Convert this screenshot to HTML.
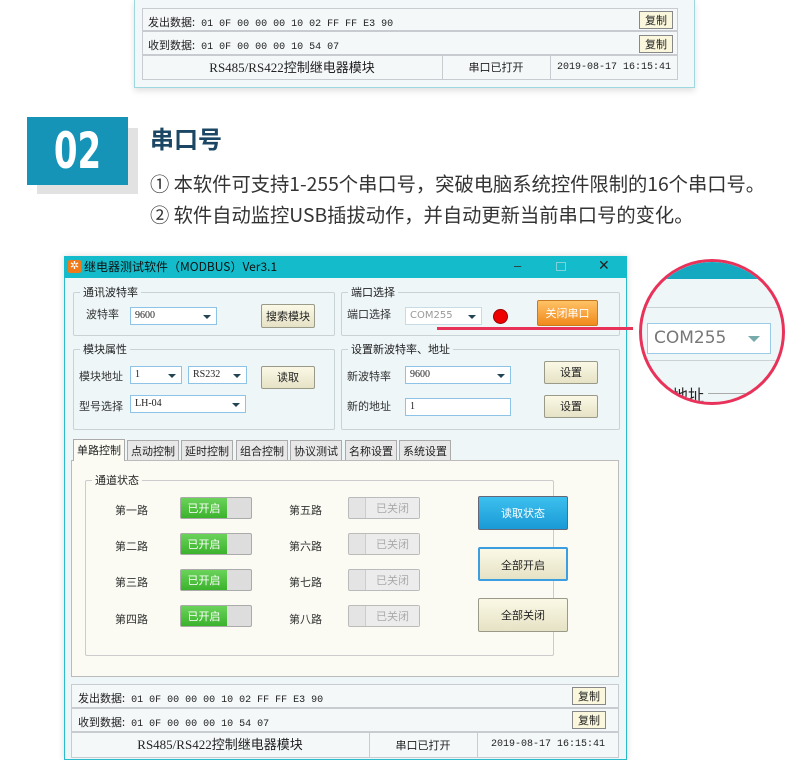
<!DOCTYPE html>
<html><head><meta charset="utf-8"><style>
*{margin:0;padding:0;box-sizing:border-box}
body{width:790px;height:760px;background:#fff;position:relative;overflow:hidden;font-family:"Liberation Sans","Noto Sans CJK SC",sans-serif;color:#222}
.a{position:absolute}
.t12{font-size:11px;font-family:"Noto Sans CJK SC",sans-serif}
.mono{font-family:"Liberation Mono","Noto Sans CJK SC",monospace;font-size:10px}
.gb{position:absolute;border:1px solid #c9d3d6;border-radius:2px}
.gb>.lg{position:absolute;top:-9px;left:6px;background:#eef6f8;padding:0 3px;font-size:11px;font-family:"Noto Sans CJK SC",sans-serif}
.sel{position:absolute;background:#fff;border:1px solid #8cc3e6;height:18px;font-size:10px;padding:2px 4px;font-family:"Liberation Serif",serif}
.sel:after{content:"";position:absolute;right:5px;top:7px;border:4px solid transparent;border-top:4px solid #245;border-bottom:0}
.btn{position:absolute;border:1px solid #9a9a88;border-radius:2px;background:linear-gradient(#fbf9e6,#e6e2c6);font-size:11px;text-align:center;font-family:"Noto Sans CJK SC",sans-serif}
.tab{position:absolute;top:440px;height:20px;border:1px solid #aaa;border-bottom:0;background:#e8e8e8;font-size:11px;padding:2px 3px;font-family:"Noto Sans CJK SC",sans-serif}
.on{position:absolute;width:72px;height:22px;border:1px solid #aaa;border-radius:2px;background:#ddd}
.on i{position:absolute;left:0;top:0;width:46px;height:20px;background:linear-gradient(#6ad35a,#3bb22c);color:#fff;font-style:normal;font-size:11px;text-align:center;line-height:20px;font-family:"Noto Sans CJK SC",sans-serif}
.off{position:absolute;width:72px;height:22px;border:1px solid #bbb;border-radius:2px;background:#e4e4e4}
.off i{position:absolute;right:0;top:0;width:54px;height:20px;background:#ececec;border-left:1px solid #ccc;color:#aaa;font-style:normal;font-size:11px;text-align:center;line-height:20px;font-family:"Noto Sans CJK SC",sans-serif}
.lb{position:absolute;font-size:11px;font-family:"Noto Sans CJK SC",sans-serif;color:#333}
.row{position:absolute;border:1px solid #c8ccd0;background:#f4f8f9}
.cp{position:absolute;width:34px;height:18px;border:1px solid #888;background:#fbf7dc;font-size:11px;text-align:center;line-height:16px;font-family:"Noto Sans CJK SC",sans-serif}
</style></head><body>

<div class="a" style="left:134px;top:0;width:561px;height:88px;background:#f2f8fa;border:1px solid #9fd7df;border-top:0;box-shadow:0 3px 6px rgba(0,0,0,.12)"></div>
<div class="row" style="left:142px;top:8px;width:536px;height:23px"><span class="mono a" style="left:5px;top:5px"><span class="t12">发出数据:</span> 01 0F 00 00 00 10 02 FF FF E3 90</span><div class="cp" style="left:496px;top:2px">复制</div></div>
<div class="row" style="left:142px;top:31px;width:536px;height:24px"><span class="mono a" style="left:5px;top:5px"><span class="t12">收到数据:</span> 01 0F 00 00 00 10 54 07</span><div class="cp" style="left:496px;top:3px">复制</div></div>
<div class="row" style="left:142px;top:55px;width:536px;height:25px"></div>
<div class="a" style="left:142px;top:55px;width:300px;height:25px;font-size:13px;text-align:center;line-height:25px;font-family:'Liberation Serif','Noto Sans CJK SC',serif">RS485/RS422控制继电器模块</div>
<div class="a" style="left:442px;top:55px;width:1px;height:25px;background:#c8ccd0"></div>
<div class="a t12" style="left:442px;top:55px;width:108px;text-align:center;line-height:25px">串口已打开</div>
<div class="a" style="left:550px;top:55px;width:1px;height:25px;background:#c8ccd0"></div>
<div class="a mono" style="left:550px;top:55px;width:128px;text-align:center;line-height:25px">2019-08-17 16:15:41</div>

<div class="a" style="left:37px;top:128px;width:101px;height:66px;background:#e2e2e2"></div>
<div class="a" style="left:27px;top:117px;width:101px;height:68px;background:#1694b8"></div>
<div class="a" style="left:27px;top:117px;width:101px;height:68px;color:#fff;font-size:50px;font-weight:bold;text-align:center;line-height:68px;font-family:'DejaVu Sans','Liberation Sans',sans-serif;transform:scaleX(0.68)">02</div>
<div class="a" style="left:150px;top:121px;font-size:24px;font-weight:bold;color:#1b4764;font-family:'Noto Sans CJK SC',sans-serif;line-height:34px">串口号</div>
<div class="a" style="left:150px;top:169px;font-size:19.3px;color:#333;font-family:'Noto Sans CJK SC',sans-serif;line-height:28px;white-space:nowrap">① 本软件可支持1-255个串口号，突破电脑系统控件限制的16个串口号。</div>
<div class="a" style="left:150px;top:200px;font-size:19.3px;color:#333;font-family:'Noto Sans CJK SC',sans-serif;line-height:28px;white-space:nowrap">② 软件自动监控USB插拔动作，并自动更新当前串口号的变化。</div>

<div class="a" style="left:64px;top:256px;width:563px;height:504px;background:#eef6f8;border:1px solid #2bbccb;box-shadow:0 0 6px rgba(0,0,0,.15)"></div>
<div class="a" style="left:64px;top:256px;width:563px;height:22px;background:#14bccb"></div>
<div class="a" style="left:68px;top:260px;width:13px;height:13px;background:#f07a1a;border-radius:2px;color:#fff;font-size:11px;line-height:13px;text-align:center">✲</div>
<div class="a" style="left:84px;top:258px;font-size:12px;color:#111;font-family:'Noto Sans CJK SC',sans-serif">继电器测试软件（MODBUS）Ver3.1</div>
<div class="a" style="left:514px;top:258px;font-size:13px;color:#333">–</div>
<div class="a" style="left:556px;top:262px;width:10px;height:9px;border:1px solid #7fd0d8"></div>
<div class="a" style="left:598px;top:257px;font-size:14px;color:#222">✕</div>

<div class="gb" style="left:73px;top:292px;width:262px;height:44px"><span class="lg">通讯波特率</span></div>
<div class="lb" style="left:86px;top:306px">波特率</div>
<div class="sel" style="left:130px;top:307px;width:87px">9600</div>
<div class="btn" style="left:261px;top:304px;width:54px;height:24px;line-height:22px">搜索模块</div>

<div class="gb" style="left:341px;top:292px;width:279px;height:44px"><span class="lg">端口选择</span></div>
<div class="lb" style="left:347px;top:306px">端口选择</div>
<div class="sel" style="left:405px;top:307px;width:77px;color:#999;font-family:'DejaVu Sans',sans-serif;border-color:#c7dbe6">COM255</div>
<div class="a" style="left:493px;top:309px;width:15px;height:15px;border-radius:50%;background:#e00;border:1px solid #900"></div>
<div class="btn" style="left:537px;top:300px;width:61px;height:26px;line-height:24px;background:linear-gradient(#ffc266,#f08a1c);color:#fff;border-color:#c87a20">关闭串口</div>

<div class="gb" style="left:73px;top:349px;width:262px;height:81px"><span class="lg">模块属性</span></div>
<div class="lb" style="left:79px;top:368px">模块地址</div>
<div class="sel" style="left:130px;top:366px;width:52px">1</div>
<div class="sel" style="left:188px;top:366px;width:59px">RS232</div>
<div class="btn" style="left:261px;top:366px;width:54px;height:23px;line-height:21px">读取</div>
<div class="lb" style="left:79px;top:398px">型号选择</div>
<div class="sel" style="left:130px;top:395px;width:116px">LH-04</div>

<div class="gb" style="left:341px;top:349px;width:279px;height:81px"><span class="lg">设置新波特率、地址</span></div>
<div class="lb" style="left:347px;top:368px">新波特率</div>
<div class="sel" style="left:405px;top:366px;width:106px">9600</div>
<div class="btn" style="left:544px;top:361px;width:54px;height:23px;line-height:21px">设置</div>
<div class="lb" style="left:347px;top:398px">新的地址</div>
<div class="a" style="left:405px;top:398px;width:106px;height:18px;background:#fff;border:1px solid #8cc3e6;font-size:10px;padding:2px 4px;font-family:'Liberation Serif',serif">1</div>
<div class="btn" style="left:544px;top:395px;width:54px;height:23px;line-height:21px">设置</div>

<div class="tab" style="left:73px;top:439px;height:22px;background:#fbfbf3;z-index:2">单路控制</div>
<div class="tab" style="left:127px">点动控制</div>
<div class="tab" style="left:181px">延时控制</div>
<div class="tab" style="left:236px">组合控制</div>
<div class="tab" style="left:290px">协议测试</div>
<div class="tab" style="left:345px">名称设置</div>
<div class="tab" style="left:399px">系统设置</div>
<div class="a" style="left:71px;top:460px;width:548px;height:217px;background:#fbfbf3;border:1px solid #bbb"></div>
<div class="gb" style="left:85px;top:480px;width:469px;height:176px;border-color:#ccc"><span class="lg" style="background:#fbfbf3">通道状态</span></div>

<div class="lb" style="left:115px;top:502px">第一路</div><div class="on" style="left:180px;top:497px"><i>已开启</i></div>
<div class="lb" style="left:115px;top:538px">第二路</div><div class="on" style="left:180px;top:533px"><i>已开启</i></div>
<div class="lb" style="left:115px;top:574px">第三路</div><div class="on" style="left:180px;top:569px"><i>已开启</i></div>
<div class="lb" style="left:115px;top:611px">第四路</div><div class="on" style="left:180px;top:605px"><i>已开启</i></div>
<div class="lb" style="left:289px;top:502px">第五路</div><div class="off" style="left:348px;top:497px"><i>已关闭</i></div>
<div class="lb" style="left:289px;top:538px">第六路</div><div class="off" style="left:348px;top:533px"><i>已关闭</i></div>
<div class="lb" style="left:289px;top:574px">第七路</div><div class="off" style="left:348px;top:569px"><i>已关闭</i></div>
<div class="lb" style="left:289px;top:611px">第八路</div><div class="off" style="left:348px;top:605px"><i>已关闭</i></div>

<div class="btn" style="left:478px;top:496px;width:90px;height:34px;line-height:32px;background:linear-gradient(#3cc0ee,#1a9ad6);color:#fff;border-color:#667">读取状态</div>
<div class="btn" style="left:478px;top:547px;width:90px;height:34px;line-height:32px;border:2px solid #3a9ee0">全部开启</div>
<div class="btn" style="left:478px;top:598px;width:90px;height:34px;line-height:32px">全部关闭</div>

<div class="row" style="left:71px;top:684px;width:548px;height:24px"><span class="mono a" style="left:6px;top:5px"><span class="t12">发出数据:</span> 01 0F 00 00 00 10 02 FF FF E3 90</span><div class="cp" style="left:500px;top:2px">复制</div></div>
<div class="row" style="left:71px;top:708px;width:548px;height:24px"><span class="mono a" style="left:6px;top:5px"><span class="t12">收到数据:</span> 01 0F 00 00 00 10 54 07</span><div class="cp" style="left:500px;top:2px">复制</div></div>
<div class="row" style="left:71px;top:732px;width:548px;height:26px"></div>
<div class="a" style="left:71px;top:732px;width:298px;height:26px;font-size:13px;text-align:center;line-height:26px;font-family:'Liberation Serif','Noto Sans CJK SC',serif">RS485/RS422控制继电器模块</div>
<div class="a" style="left:369px;top:732px;width:1px;height:26px;background:#c8ccd0"></div>
<div class="a t12" style="left:369px;top:732px;width:108px;text-align:center;line-height:26px">串口已打开</div>
<div class="a" style="left:477px;top:732px;width:1px;height:26px;background:#c8ccd0"></div>
<div class="a mono" style="left:477px;top:732px;width:142px;text-align:center;line-height:26px">2019-08-17 16:15:41</div>

<div class="a" style="left:437px;top:327px;width:196px;height:3px;background:#e8325a"></div>

<div class="a" style="left:639px;top:259px;width:146px;height:146px;border-radius:50%;overflow:hidden;border:3px solid #e8325a;background:#eef6f8">
  <div class="a" style="left:0;top:0;width:146px;height:17px;background:#14a9c0"></div>
  <div class="a" style="left:0;top:45px;width:146px;height:1px;background:#c9d3d6"></div>
  <div class="a" style="left:5px;top:61px;width:124px;height:31px;background:#fff;border:1px solid #9ccbe8;font-size:17px;color:#777;padding:4px 6px;font-family:'DejaVu Sans',sans-serif">COM255</div>
  <div class="a" style="left:106px;top:74px;border:6px solid transparent;border-top:6px solid #7aa;border-bottom:0"></div>
  <div class="a" style="left:0;top:98px;width:146px;height:1px;background:#c9d3d6"></div>
  <div class="a" style="left:30px;top:120px;font-size:16px;font-family:'Noto Sans CJK SC',sans-serif">地址</div>
  <div class="a" style="left:66px;top:131px;width:60px;height:1px;background:#aaa"></div>
</div>
</body></html>
